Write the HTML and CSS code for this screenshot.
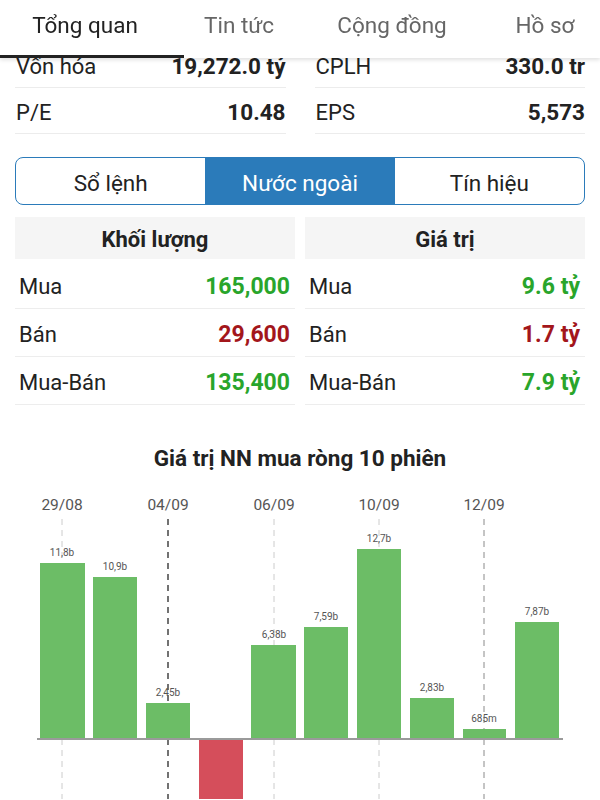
FILE: index.html
```html
<!DOCTYPE html>
<html lang="vi">
  <head>
    <meta charset="UTF-8" />
    <meta name="viewport" content="width=device-width, initial-scale=1.0" />
    <title>Nước ngoài</title>
    <link rel="stylesheet" href="styles.css">
  </head>
  <body>
    <nav class="tabs">
      <div class="tab tab-active">Tổng quan</div>
      <div class="tab">Tin tức</div>
      <div class="tab">Cộng đồng</div>
      <div class="tab">Hồ sơ</div>
    </nav>

    <main class="content">
      <section class="info-grid">
        <div class="info-row"><span>Vốn hóa</span><b>19,272.0 tỷ</b></div>
        <div class="info-row"><span>CPLH</span><b>330.0 tr</b></div>
        <div class="info-row"><span>P/E</span><b>10.48</b></div>
        <div class="info-row"><span>EPS</span><b>5,573</b></div>
      </section>

      <div class="segments">
        <div class="segment">Sổ lệnh</div>
        <div class="segment segment-active">Nước ngoài</div>
        <div class="segment">Tín hiệu</div>
      </div>

      <section class="trade-grid">
        <div class="trade-col">
          <div class="trade-head">Khối lượng</div>
          <div class="trade-row"><span>Mua</span><b class="up">165,000</b></div>
          <div class="trade-row"><span>Bán</span><b class="down">29,600</b></div>
          <div class="trade-row"><span>Mua-Bán</span><b class="up">135,400</b></div>
        </div>
        <div class="trade-col">
          <div class="trade-head">Giá trị</div>
          <div class="trade-row"><span>Mua</span><b class="up">9.6 tỷ</b></div>
          <div class="trade-row"><span>Bán</span><b class="down">1.7 tỷ</b></div>
          <div class="trade-row"><span>Mua-Bán</span><b class="up">7.9 tỷ</b></div>
        </div>
      </section>

      <h2 class="chart-title">Giá trị NN mua ròng 10 phiên</h2>

      <svg class="chart" width="600" height="320" viewBox="0 480 600 320">
        <g class="dates">
          <text x="62" y="511">29/08</text>
          <text x="168" y="511">04/09</text>
          <text x="274" y="511">06/09</text>
          <text x="379" y="511">10/09</text>
          <text x="484" y="511">12/09</text>
        </g>
        <g class="grid">
          <line x1="62" y1="520" x2="62" y2="800" />
          <line x1="168" y1="520" x2="168" y2="800" class="grid-focus" />
          <line x1="274" y1="520" x2="274" y2="800" />
          <line x1="379" y1="520" x2="379" y2="800" />
          <line x1="484" y1="520" x2="484" y2="800" class="grid-mid" />
        </g>
        <g class="bars">
          <rect x="40" y="564" width="45" height="176" />
          <rect x="93" y="578" width="44" height="162" />
          <rect x="146" y="704" width="44" height="36" />
          <rect x="199" y="740" width="44" height="70" class="bar-neg" />
          <rect x="251" y="646" width="45" height="94" />
          <rect x="304" y="628" width="44" height="112" />
          <rect x="357" y="550" width="44" height="190" />
          <rect x="410" y="699" width="44" height="41" />
          <rect x="463" y="730" width="43" height="10" />
          <rect x="515" y="623" width="44" height="117" />
        </g>
        <line x1="37" y1="740" x2="563" y2="740" class="axis" />
        <g class="labels">
          <text x="62" y="557">11,8b</text>
          <text x="115" y="571">10,9b</text>
          <text x="168" y="697">2,45b</text>
          <text x="274" y="639">6,38b</text>
          <text x="326" y="621">7,59b</text>
          <text x="379" y="543">12,7b</text>
          <text x="432" y="692">2,83b</text>
          <text x="484" y="723">685m</text>
          <text x="537" y="616">7,87b</text>
        </g>
      </svg>
    </main>
  </body>
</html>
```

FILE: styles.css
```css
body {
  margin: 0;
  font-family: Roboto, "Liberation Sans", sans-serif;
  color: #222222;
  background: #ffffff;
  overflow: hidden;
}
.tabs {
  position: fixed;
  top: 0;
  left: 0;
  right: 0;
  z-index: 2;
  height: 58px;
  display: grid;
  grid-template-columns: 184px 110px 196px 110px;
  background: #ffffff;
  box-shadow: 0 2px 4px rgba(0, 0, 0, 0.12);
}
.tab {
  display: flex;
  align-items: center;
  justify-content: center;
  padding-bottom: 8px;
  font-size: 22.5px;
  color: #666666;
  white-space: nowrap;
}
.tab-active {
  padding-right: 14px;
  color: #222222;
  border-bottom: 3px solid #222222;
  padding-bottom: 5px;
}
.content {
  padding: 42px 15px 0;
}
.info-grid {
  display: grid;
  grid-template-columns: 1fr 1fr;
  column-gap: 29px;
}
.info-row {
  display: flex;
  justify-content: space-between;
  align-items: center;
  height: 45px;
  padding: 3px 0 0 1px;
  box-sizing: border-box;
  height: 46px;
  border-bottom: 1px solid #ececec;
  font-size: 22px;
}
.info-row b {
  font-size: 22.5px;
  font-weight: 700;
}
.segments {
  display: grid;
  grid-template-columns: 1fr 1fr 1fr;
  margin-top: 23px;
  height: 46px;
  border: 1.5px solid #2b7bba;
  border-radius: 8px;
  overflow: hidden;
}
.segment {
  display: flex;
  align-items: center;
  justify-content: center;
  padding-top: 4px;
  font-size: 22.5px;
  color: #222222;
}
.segment-active {
  background: #2b7bba;
  color: #ffffff;
}
.trade-grid {
  display: grid;
  grid-template-columns: 1fr 1fr;
  column-gap: 10px;
  margin-top: 12px;
}
.trade-head {
  height: 42px;
  display: flex;
  align-items: center;
  justify-content: center;
  padding-top: 3px;
  box-sizing: border-box;
  margin-bottom: 2px;
  background: #f5f5f5;
  font-size: 22px;
  font-weight: 700;
}
.trade-row {
  display: flex;
  justify-content: space-between;
  align-items: center;
  height: 48px;
  padding: 4px 5px 0 4px;
  box-sizing: border-box;
  border-bottom: 1px solid #ededed;
  font-size: 22px;
}
.trade-row b {
  font-size: 23px;
  font-weight: 700;
}
.up {
  color: #29a52b;
}
.down {
  color: #a3161b;
}
.chart-title {
  margin: 40px 0 0;
  height: 26px;
  line-height: 26px;
  text-align: center;
  font-size: 22.5px;
  font-weight: 700;
}
.chart {
  display: block;
  margin: 8px 0 0 -15px;
}
.dates text {
  font-size: 15.5px;
  fill: #555555;
  text-anchor: middle;
}
.grid line {
  stroke: #cccccc;
  stroke-width: 1;
  stroke-dasharray: 6 5;
}
.grid .grid-focus {
  stroke: #444444;
  stroke-width: 1.5;
}
.grid .grid-mid {
  stroke: #8a8a8a;
}
.bars rect {
  fill: #6cbd66;
}
.bars .bar-neg {
  fill: #d54e5b;
}
.axis {
  stroke: #9a9a9a;
  stroke-width: 2;
}
.labels text {
  font-size: 10px;
  fill: #555555;
  text-anchor: middle;
}
```
